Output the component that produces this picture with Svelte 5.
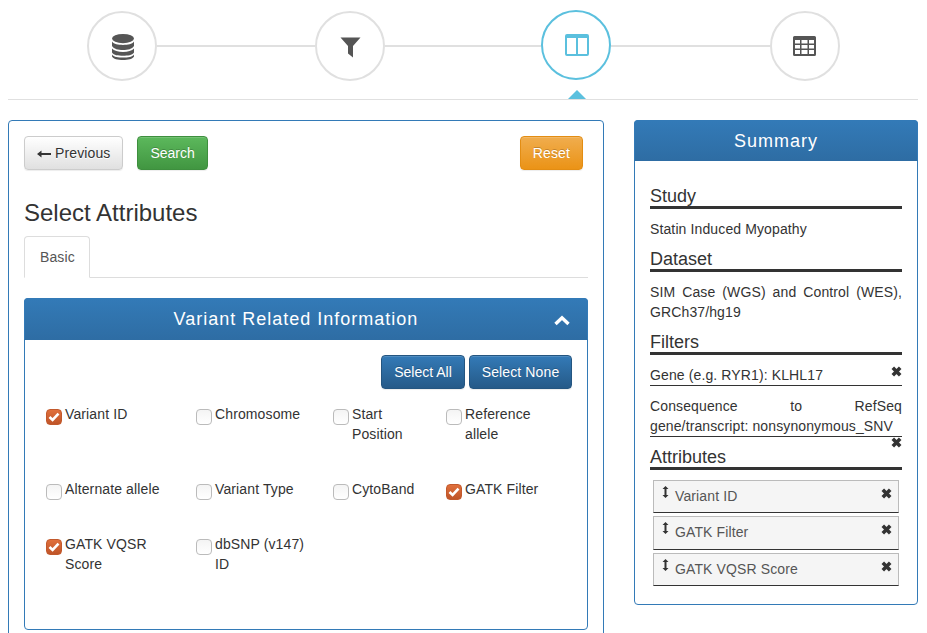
<script>
  const steps = ['database', 'filter', 'columns', 'table'];
  const activeStep = 'columns';
  // connector lengths between the step circles
  const links = [158, 156, 159];

  const attributes = [
    { label: 'Variant ID', checked: true },
    { label: 'Chromosome', checked: false },
    { label: 'Start Position', checked: false },
    { label: 'Reference allele', checked: false },
    { label: 'Alternate allele', checked: false },
    { label: 'Variant Type', checked: false },
    { label: 'CytoBand', checked: false },
    { label: 'GATK Filter', checked: true },
    { label: 'GATK VQSR Score', checked: true },
    { label: 'dbSNP (v147) ID', checked: false }
  ];

  const selected = ['Variant ID', 'GATK Filter', 'GATK VQSR Score'];
</script>

{#snippet removeIcon()}
  <svg class="remove" width="11" height="11" viewBox="0 0 11 11">
    <path d="M1.8 1.8 L9.2 9.2 M9.2 1.8 L1.8 9.2" stroke="#333" stroke-width="3.6" fill="none" />
  </svg>
{/snippet}

<div class="page">
  <nav class="steps">
    {#each steps as step, i}
      {#if i > 0}
        <span class="link" style="width: {links[i - 1]}px"></span>
      {/if}
      <div class="circle" class:active={step === activeStep}>
        {#if step === 'database'}
          <svg class="db" width="22" height="26" viewBox="0 0 22 26" fill="#555">
            <ellipse cx="11" cy="4.6" rx="11" ry="4.6" />
            <path d="M0 7.6 C2 10.4 6 11 11 11 C16 11 20 10.4 22 7.6 V12 C20 15 16 16 11 16 C6 16 2 15 0 12 Z" />
            <path d="M0 14.6 C2 17 6 18 11 18 C16 18 20 17 22 14.6 V18.6 C20 21.4 16 21.8 11 21.8 C6 21.8 2 21.4 0 18.6 Z" />
            <path d="M0 20.4 C2 23 6 23.6 11 23.6 C16 23.6 20 23 22 20.4 V22.5 C21 25 16 26 11 26 C6 26 1 25 0 22.5 Z" />
          </svg>
        {:else if step === 'filter'}
          <svg class="funnel" width="21" height="21" viewBox="0 0 21 21" fill="#555">
            <path d="M0.5 0.5 H20.5 L13 9 V20.5 L8 16.5 V9 Z" />
          </svg>
        {:else if step === 'columns'}
          <svg class="cols" width="24" height="22" viewBox="0 0 24 22" fill="#5bc0de">
            <path fill-rule="evenodd" d="M2 0 H22 Q24 0 24 2 V20 Q24 22 22 22 H2 Q0 22 0 20 V2 Q0 0 2 0 Z M2 4 V20 H11 V4 Z M13 4 V20 H22 V4 Z" />
          </svg>
        {:else}
          <svg class="grid-icon" width="23" height="20" viewBox="0 0 23 20" fill="#555">
            <path fill-rule="evenodd" d="M1.5 0 H21.5 Q23 0 23 1.5 V18.5 Q23 20 21.5 20 H1.5 Q0 20 0 18.5 V1.5 Q0 0 1.5 0 Z
              M2 4 V7.5 H7 V4 Z M8.5 4 V7.5 H14.5 V4 Z M16 4 V7.5 H21 V4 Z
              M2 9 V12.5 H7 V9 Z M8.5 9 V12.5 H14.5 V9 Z M16 9 V12.5 H21 V9 Z
              M2 14 V18 H7 V14 Z M8.5 14 V18 H14.5 V14 Z M16 14 V18 H21 V14 Z" />
          </svg>
        {/if}
      </div>
    {/each}
  </nav>

  <div class="columns">
    <section class="main-panel">
      <div class="toolbar">
        <button class="btn btn-default">
          <svg width="14" height="8" viewBox="0 0 14 8"><path d="M0 4 L4.5 0.5 V3 H14 V5 H4.5 V7.5 Z" fill="#333" /></svg>
          Previous
        </button>
        <button class="btn btn-success">Search</button>
        <button class="btn btn-warning reset">Reset</button>
      </div>

      <h3>Select Attributes</h3>

      <div class="tabs">
        <div class="tab">Basic</div>
      </div>

      <div class="panel inner">
        <div class="panel-heading">
          <span>Variant Related Information</span>
          <svg class="chevron" width="16" height="11" viewBox="0 0 16 11">
            <path d="M1.5 9 L8 2.8 L14.5 9" stroke="#fff" stroke-width="3.4" fill="none" />
          </svg>
        </div>
        <div class="inner-body">
          <div class="select-btns">
            <button class="btn btn-primary">Select All</button>
            <button class="btn btn-primary">Select None</button>
          </div>
          <div class="attr-grid">
            {#each attributes as attr}
              <div class="attr">
                <span class="box" class:checked={attr.checked}>
                  {#if attr.checked}
                    <svg width="12" height="10" viewBox="0 0 12 10">
                      <path d="M1.5 5 L4.6 8 L10.5 1.6" stroke="#fff" stroke-width="2.6" fill="none" />
                    </svg>
                  {/if}
                </span>
                <span>{attr.label}</span>
              </div>
            {/each}
          </div>
        </div>
      </div>
    </section>

    <aside class="panel summary">
      <div class="panel-heading">Summary</div>
      <div class="summary-body">
        <h4>Study</h4>
        <p>Statin Induced Myopathy</p>
        <h4>Dataset</h4>
        <p>SIM Case (WGS) and Control (WES), GRCh37/hg19</p>
        <h4>Filters</h4>
        <div class="filter">Gene (e.g. RYR1): KLHL17 {@render removeIcon()}</div>
        <div class="filter below">Consequence to RefSeq gene/transcript: nonsynonymous_SNV {@render removeIcon()}</div>
        <h4>Attributes</h4>
        <ul>
          {#each selected as name}
            <li>
              <svg class="sort" width="7" height="12" viewBox="0 0 7 12">
                <path d="M3.5 0 L6.5 3 H4.5 V9 H6.5 L3.5 12 L0.5 9 H2.5 V3 H0.5 Z" fill="#333" />
              </svg>
              <span>{name}</span>
              {@render removeIcon()}
            </li>
          {/each}
        </ul>
      </div>
    </aside>
  </div>
</div>

<style>
  :global(body) {
    background: #fff;
  }

  .page {
    box-sizing: border-box;
    height: 633px;
    overflow: hidden;
    padding: 0 9px 0 8px;
    font-family: 'Liberation Sans', Arial, sans-serif;
    font-size: 14px;
    line-height: 20px;
    letter-spacing: 0.12px;
    color: #333;
  }

  /* wizard steps */
  .steps {
    display: flex;
    align-items: center;
    height: 88px;
    padding: 11px 0 0 79px;
    border-bottom: 1px solid #e0e0e0;
    margin-bottom: 20px;
  }

  .link {
    height: 2px;
    background: #e0e0e0;
    margin-bottom: 18px;
  }

  .circle {
    box-sizing: border-box;
    width: 70px;
    height: 70px;
    margin-bottom: 18px;
    border: 2px solid #e0e0e0;
    border-radius: 50%;
    display: flex;
    align-items: center;
    justify-content: center;
  }

  .circle.active {
    position: relative;
    border-color: #5bc0de;
    margin-bottom: 20px;
  }

  /* pointer under the current step */
  .circle.active::after {
    content: '';
    position: absolute;
    left: 25px;
    top: 78px;
    border-left: 9.5px solid transparent;
    border-right: 9.5px solid transparent;
    border-bottom: 9px solid #5bc0de;
  }

  .db {
    margin: 2px 0 0 2px;
  }

  .funnel {
    margin-top: 3px;
  }

  .cols {
    margin-left: 2px;
  }

  .grid-icon {
    margin-right: 1px;
  }

  .columns {
    display: grid;
    grid-template-columns: 596px 284px;
    gap: 30px;
    align-items: start;
  }

  .main-panel {
    border: 1px solid #337ab7;
    border-radius: 4px;
    padding: 15px;
    min-height: 600px;
  }

  .toolbar {
    display: flex;
    gap: 14px;
  }

  .reset {
    margin-left: auto;
    margin-right: 5px;
  }

  .btn {
    box-sizing: border-box;
    height: 34px;
    padding: 6px 12px;
    font: inherit;
    letter-spacing: inherit;
    border: 1px solid transparent;
    border-radius: 4px;
    text-shadow: 0 -1px 0 rgba(0, 0, 0, 0.2);
    box-shadow: inset 0 1px 0 rgba(255, 255, 255, 0.15), 0 1px 1px rgba(0, 0, 0, 0.075);
    color: #fff;
  }

  .btn-default {
    color: #333;
    background: linear-gradient(#fff, #e0e0e0);
    border-color: #ccc;
    text-shadow: 0 1px 0 #fff;
  }

  .btn-success {
    background: linear-gradient(#5cb85c, #419641);
    border-color: #3e8f3e;
    letter-spacing: 0;
  }

  .btn-warning {
    background: linear-gradient(#f0ad4e, #eb9316);
    border-color: #e38d13;
  }

  .btn-primary {
    background: linear-gradient(#337ab7, #265a88);
    border-color: #245580;
    width: 84px;
    padding: 6px 0;
    letter-spacing: 0;
  }

  .btn-primary + .btn-primary {
    width: 103px;
    letter-spacing: 0.12px;
  }

  h3 {
    margin: 30px 0 10px;
    font-size: 24px;
    font-weight: 500;
    line-height: 26.4px;
    letter-spacing: 0;
  }

  .tabs {
    border-bottom: 1px solid #ddd;
    height: 41px;
  }

  .tab {
    box-sizing: border-box;
    width: 66px;
    height: 42px;
    padding: 10px 15px;
    color: #555;
    background: #fff;
    border: 1px solid #ddd;
    border-bottom-color: #fff;
    border-radius: 4px 4px 0 0;
  }

  .panel {
    border: 1px solid #337ab7;
    border-radius: 4px;
    box-sizing: border-box;
  }

  .panel-heading {
    box-sizing: border-box;
    height: 41px;
    margin: -1px -1px 0;
    padding: 0 15px;
    border: 1px solid #337ab7;
    border-bottom-color: #2e6da4;
    border-radius: 4px 4px 0 0;
    background: linear-gradient(#337ab7, #2e6da4);
    color: #fff;
    font-size: 18px;
    letter-spacing: 1px;
    display: flex;
    align-items: center;
    justify-content: center;
    position: relative;
  }

  .inner {
    margin-top: 20px;
  }

  .inner .panel-heading {
    height: 42px;
    padding-right: 35px;
  }

  .chevron {
    position: absolute;
    right: 17px;
    top: 16px;
  }

  .inner-body {
    padding: 15px;
  }

  .select-btns {
    display: flex;
    justify-content: flex-end;
    gap: 4px;
  }

  .attr-grid {
    display: grid;
    grid-template-columns: 150px 137px 113px 100px;
    row-gap: 35px;
    margin: 15px 0 40px 6px;
  }

  .attr {
    display: flex;
    gap: 3px;
    align-items: flex-start;
    padding-right: 25px;
  }

  .attr:nth-child(4n) {
    padding-right: 0;
  }

  .box {
    flex: none;
    box-sizing: border-box;
    width: 16px;
    height: 16px;
    margin: 5px 0 -1px;
    border: 1px solid #bbb;
    border-radius: 4px;
    background: linear-gradient(#f4f4f4, #fff);
    display: flex;
    align-items: center;
    justify-content: center;
  }

  .box.checked {
    border-color: #c2592c;
    background: linear-gradient(#e0703c, #bf5428);
  }

  .summary {
    min-height: 484px;
  }

  .summary-body {
    padding: 15px;
  }

  h4 {
    margin: 10px 0;
    font-size: 18px;
    font-weight: 500;
    line-height: 20px;
    letter-spacing: 0;
    border-bottom: 3px solid #333;
  }

  p {
    margin: 10px 0;
    text-align: justify;
  }

  .filter {
    position: relative;
    margin: 10px 0;
    text-align: justify;
    border-bottom: 1px solid #333;
  }

  .filter .remove {
    position: absolute;
    right: 0;
    top: 1px;
  }

  .filter.below .remove {
    top: 41px;
  }

  ul {
    list-style: none;
    margin: 10px 3px 3px;
    padding: 0;
  }

  li {
    box-sizing: border-box;
    height: 33.33px;
    margin-bottom: 3px;
    padding: 5px 6px 0 8px;
    display: flex;
    gap: 6px;
    background: #f5f5f5;
    color: #555;
    border: 1px solid #bbb;
    border-bottom-color: #333;
  }

  li span {
    flex: 1;
  }

  li .remove {
    margin-top: 2px;
  }
</style>
